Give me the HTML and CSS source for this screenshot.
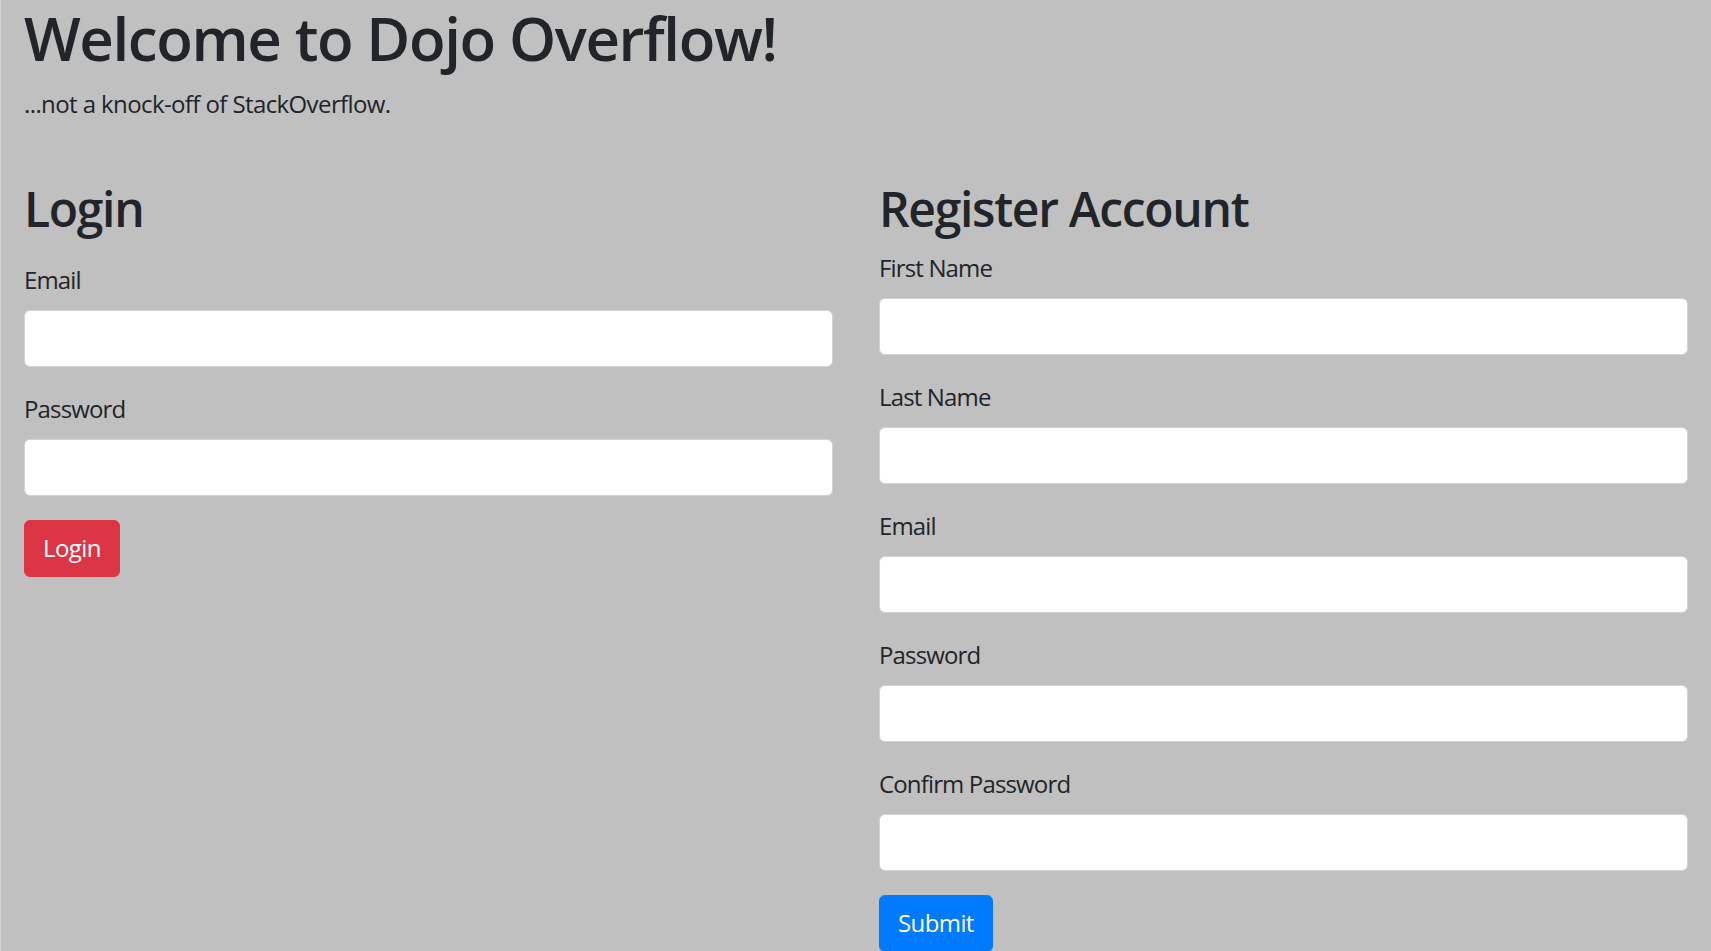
FILE: index.html
```html
<!DOCTYPE html>
<html lang="en">
<head>
<meta charset="utf-8">
<title>Dojo Overflow</title>
<link rel="stylesheet" href="styles.css">
</head>
<body>
<div class="page">
  <header class="intro">
    <h1 class="title">Welcome to Dojo Overflow!</h1>
    <p class="tagline">...not a knock-off of StackOverflow.</p>
  </header>
  <main class="columns">
    <section class="col">
      <h2 class="col-title">Login</h2>
      <form class="form form-login">
        <div class="group">
          <label class="label" for="l-email">Email</label>
          <input class="field" id="l-email" type="email">
        </div>
        <div class="group">
          <label class="label" for="l-pass">Password</label>
          <input class="field" id="l-pass" type="password">
        </div>
        <button class="btn btn-danger" type="button">Login</button>
      </form>
    </section>
    <section class="col">
      <h2 class="col-title">Register Account</h2>
      <form class="form">
        <div class="group">
          <label class="label" for="r-first">First Name</label>
          <input class="field" id="r-first" type="text">
        </div>
        <div class="group">
          <label class="label" for="r-last">Last Name</label>
          <input class="field" id="r-last" type="text">
        </div>
        <div class="group">
          <label class="label" for="r-email">Email</label>
          <input class="field" id="r-email" type="email">
        </div>
        <div class="group">
          <label class="label" for="r-pass">Password</label>
          <input class="field" id="r-pass" type="password">
        </div>
        <div class="group">
          <label class="label" for="r-confirm">Confirm Password</label>
          <input class="field" id="r-confirm" type="password">
        </div>
        <button class="btn btn-primary" type="button">Submit</button>
      </form>
    </section>
  </main>
</div>
</body>
</html>
```
FILE: styles.css
```css
* { box-sizing: border-box; }
html, body {
  margin: 0;
  padding: 0;
  background: #c0c0c0;
}
body {
  font-family: "Open Sans", "Noto Sans", sans-serif;
  color: #212529;
  font-size: 24px;
  line-height: 36px;
  letter-spacing: -0.6px;
  min-height: 951px;
  overflow: hidden;
}
.page {
  padding: 2px 23px 0 23px;
  border-left: 1px solid #d6d6d6;
  min-height: 951px;
}
.intro { margin-bottom: 58px; }
.title {
  margin: 0 0 12px;
  font-size: 60px;
  line-height: 72px;
  font-weight: 600;
  letter-spacing: -1.4px;
}
.tagline {
  margin: 0;
  font-size: 24px;
  line-height: 36px;
}
.columns {
  display: grid;
  grid-template-columns: 1fr 1fr;
  column-gap: 46px;
}
.col-title {
  margin: 0 0 12px;
  font-size: 48px;
  line-height: 57.6px;
  font-weight: 600;
  letter-spacing: -1.3px;
}
.form-login { padding-top: 12px; }
.group { margin-bottom: 24px; }
.label {
  display: block;
  margin-bottom: 12px;
  letter-spacing: -0.85px;
}
.field {
  display: block;
  width: 100%;
  height: 57px;
  border: 1px solid #ced4da;
  border-radius: 6px;
  background: #fff;
  font: inherit;
  padding: 0 18px;
}
.btn {
  display: inline-block;
  font: inherit;
  letter-spacing: -0.6px;
  line-height: 36px;
  padding: 9.5px 18px;
  border: 1px solid transparent;
  border-radius: 6px;
  color: #fff;
  cursor: pointer;
}
.btn-danger { background: #dc3545; border-color: #dc3545; }
.btn-primary { background: #007bff; border-color: #007bff; }
```
